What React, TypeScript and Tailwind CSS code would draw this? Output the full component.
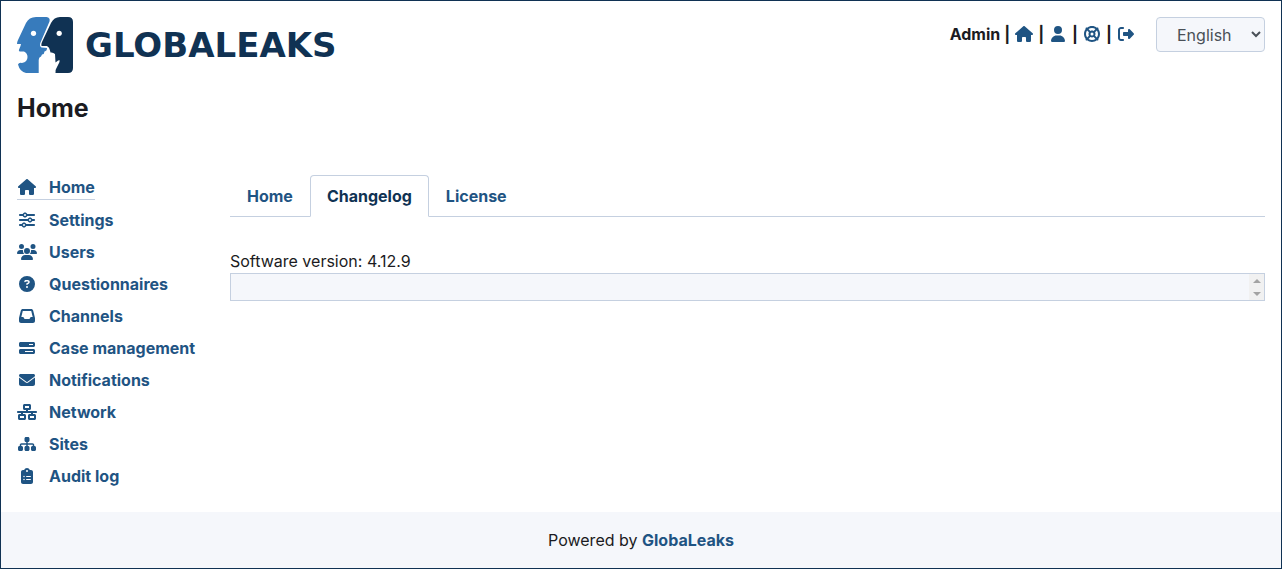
import type { ReactNode } from "react";
import type { IconType } from "react-icons";
import {
  FaBarsProgress,
  FaCircleQuestion,
  FaClipboardList,
  FaEnvelope,
  FaHouse,
  FaInbox,
  FaLifeRing,
  FaNetworkWired,
  FaRightFromBracket,
  FaSitemap,
  FaSliders,
  FaUser,
  FaUsers,
} from "react-icons/fa6";

const menu: { label: string; icon: IconType }[] = [
  { label: "Home", icon: FaHouse },
  { label: "Settings", icon: FaSliders },
  { label: "Users", icon: FaUsers },
  { label: "Questionnaires", icon: FaCircleQuestion },
  { label: "Channels", icon: FaInbox },
  { label: "Case management", icon: FaBarsProgress },
  { label: "Notifications", icon: FaEnvelope },
  { label: "Network", icon: FaNetworkWired },
  { label: "Sites", icon: FaSitemap },
  { label: "Audit log", icon: FaClipboardList },
];

const tabs = ["Home", "Changelog", "License"];

function Logo() {
  return (
    <a href="#" className="flex h-14 items-center gap-3 text-[#103253]">
      <svg viewBox="0 0 56 56" className="size-14" aria-hidden="true">
        <path
          fill="#377bbc"
          d="M19 0H29.500Q33.500 0.500 32.500 4.500L23.300 26Q22.300 29 24.500 30.500L30 31Q30 34 27.500 34.500Q27.500 37 25 37.500L24 39.500Q21.700 40 21.700 43V56H9Q3 55 1 47.500Q2 45 5 46Q10.500 45 10.500 40Q10.500 36 7 34.500H3Q1 34 2.500 31.500L3.500 29L4 27H0Q0 25 1 23L9 6Q12 0 19 0Z"
        />
        <path
          fill="#103253"
          d="M43 0H51Q56 0 56 5V51Q56 56 51 56H38.500Q38 53 39.500 51L42.500 45V43Q41 43 38.500 45.500L38 37Q36 35 33.500 35.500L33 33.500Q32.500 30 30 29H24.500Q24 27 25 25L34 6Q37 0 43 0Z"
        />
        <circle cx="16.500" cy="16.300" r="2.600" fill="white" />
        <circle cx="42.200" cy="16.300" r="2.600" fill="white" />
      </svg>
      <span className="font-['DejaVu_Sans',sans-serif] text-[34px] leading-10 font-bold">GLOBALEAKS</span>
    </a>
  );
}

function HeaderLink({ label, children }: { label: string; children: ReactNode }) {
  return (
    <>
      <span>|</span>
      <a
        href="#"
        aria-label={label}
        className="flex text-[#1f5483] [&>svg]:h-4 [&>svg]:w-5"
      >
        {children}
      </a>
    </>
  );
}

function ScrollArrow({ label, points }: { label: string; points: string }) {
  return (
    <button type="button" aria-label={label} className="flex flex-1 items-center justify-center">
      <svg viewBox="0 0 8 4" className="h-1 w-2" aria-hidden="true">
        <polygon points={points} fill="#a3a3a3" />
      </svg>
    </button>
  );
}

export default function App() {
  return (
    <div className="flex min-h-screen flex-col border border-[#103253] bg-white font-['Inter',sans-serif] text-base text-[#1b1b22]">
      <header className="px-4 pt-4">
        <div className="flex items-start justify-between">
          <Logo />
          <div className="flex items-start">
            <div className="flex h-[34px] items-center gap-1 font-bold">
              <span>Admin</span>
              <HeaderLink label="Home"><FaHouse /></HeaderLink>
              <HeaderLink label="Preferences"><FaUser /></HeaderLink>
              <HeaderLink label="Help"><FaLifeRing /></HeaderLink>
              <HeaderLink label="Logout"><FaRightFromBracket /></HeaderLink>
            </div>
            <select
              aria-label="Language"
              className="ml-5 h-[35px] w-[109px] rounded border border-[#c5d0e0] bg-[#f5f7fb] pl-4 text-[#495057]"
            >
              <option>English</option>
            </select>
          </div>
        </div>
        <h1 className="mt-4 text-[25px] leading-[38px] font-bold">Home</h1>
      </header>

      <div className="flex flex-1 items-start px-4 pt-12 pb-4">
        <nav className="w-[213px] shrink-0">
          <ul className="flex flex-col items-start gap-2">
            {menu.map(({ label, icon: Icon }, i) => (
              <li key={label}>
                <a
                  href="#"
                  className={`flex items-center gap-3 font-bold text-[#1f5483] ${i === 0 ? "border-b border-[#c5d0e0]" : ""}`}
                >
                  <Icon className="h-4 w-5" />
                  {label}
                </a>
              </li>
            ))}
          </ul>
        </nav>

        <main className="min-w-0 flex-1">
          <div role="tablist" className="flex border-b border-[#c5d0e0]">
            {tabs.map((tab) => (
              <button
                key={tab}
                role="tab"
                type="button"
                aria-selected={tab === "Changelog"}
                className={`-mb-px rounded-t border px-4 py-2 font-bold ${
                  tab === "Changelog"
                    ? "border-[#c5d0e0] border-b-white bg-white text-[#103253]"
                    : "border-transparent text-[#1f5483]"
                }`}
              >
                {tab}
              </button>
            ))}
          </div>
          <label htmlFor="changelog" className="mt-8 block">Software version: 4.12.9</label>
          <div className="flex h-7 border border-[#c5d0e0] bg-[#f5f7fb]">
            <textarea id="changelog" readOnly className="min-w-0 flex-1 resize-none" />
            <div className="flex w-[15px] flex-col bg-[#f1f1f1]">
              <ScrollArrow label="Scroll up" points="0,4 4,0 8,4" />
              <ScrollArrow label="Scroll down" points="0,0 8,0 4,4" />
            </div>
          </div>
        </main>
      </div>

      <footer className="bg-[#f5f7fb] py-4 text-center">
        Powered by <a href="#" className="font-bold text-[#1f5483]">GlobaLeaks</a>
      </footer>
    </div>
  );
}
